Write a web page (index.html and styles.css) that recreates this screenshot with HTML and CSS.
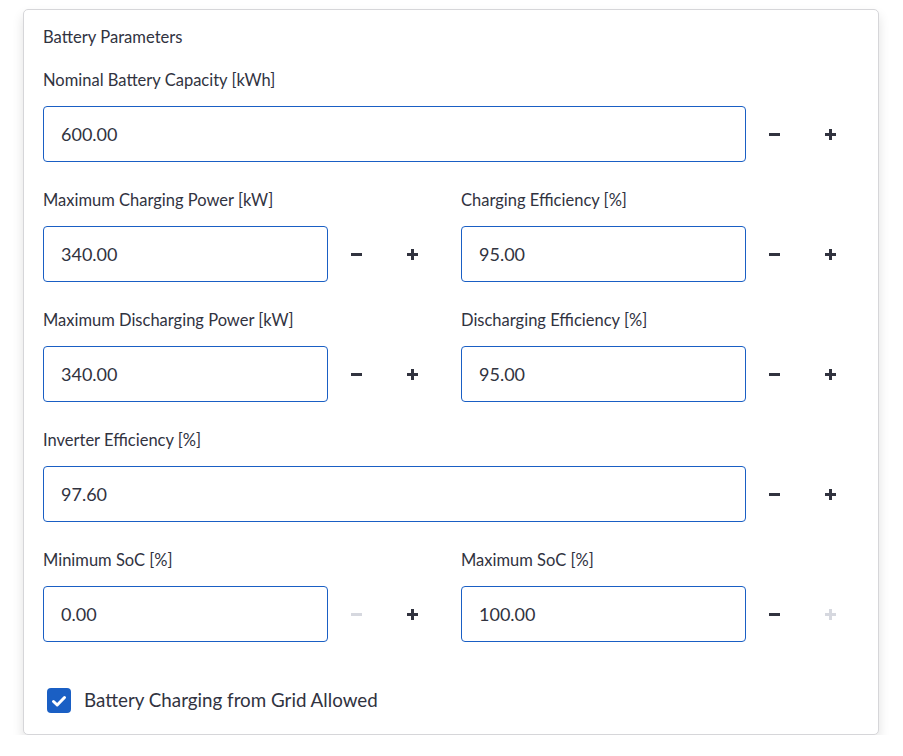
FILE: index.html
```html
<!DOCTYPE html>
<html>
<head>
<meta charset="utf-8">
<link rel="stylesheet" href="styles.css">
</head>
<body>
<div class="card">
  <div class="title">Battery Parameters</div>

  <div class="row">
    <div class="field">
      <label class="label">Nominal Battery Capacity [kWh]</label>
      <div class="control">
        <div class="input">600.00</div>
        <button class="step"><svg width="11" height="11" viewBox="0 0 11 11"><rect x="0" y="4" width="11" height="3" fill="currentColor"/></svg></button>
        <button class="step"><svg width="11" height="11" viewBox="0 0 11 11"><rect x="0" y="4" width="11" height="3" fill="currentColor"/><rect x="4" y="0" width="3" height="11" fill="currentColor"/></svg></button>
      </div>
    </div>
  </div>

  <div class="row two">
    <div class="field">
      <label class="label">Maximum Charging Power [kW]</label>
      <div class="control">
        <div class="input">340.00</div>
        <button class="step"><svg width="11" height="11" viewBox="0 0 11 11"><rect x="0" y="4" width="11" height="3" fill="currentColor"/></svg></button>
        <button class="step"><svg width="11" height="11" viewBox="0 0 11 11"><rect x="0" y="4" width="11" height="3" fill="currentColor"/><rect x="4" y="0" width="3" height="11" fill="currentColor"/></svg></button>
      </div>
    </div>
    <div class="field">
      <label class="label">Charging Efficiency [%]</label>
      <div class="control">
        <div class="input">95.00</div>
        <button class="step"><svg width="11" height="11" viewBox="0 0 11 11"><rect x="0" y="4" width="11" height="3" fill="currentColor"/></svg></button>
        <button class="step"><svg width="11" height="11" viewBox="0 0 11 11"><rect x="0" y="4" width="11" height="3" fill="currentColor"/><rect x="4" y="0" width="3" height="11" fill="currentColor"/></svg></button>
      </div>
    </div>
  </div>

  <div class="row two">
    <div class="field">
      <label class="label">Maximum Discharging Power [kW]</label>
      <div class="control">
        <div class="input">340.00</div>
        <button class="step"><svg width="11" height="11" viewBox="0 0 11 11"><rect x="0" y="4" width="11" height="3" fill="currentColor"/></svg></button>
        <button class="step"><svg width="11" height="11" viewBox="0 0 11 11"><rect x="0" y="4" width="11" height="3" fill="currentColor"/><rect x="4" y="0" width="3" height="11" fill="currentColor"/></svg></button>
      </div>
    </div>
    <div class="field">
      <label class="label">Discharging Efficiency [%]</label>
      <div class="control">
        <div class="input">95.00</div>
        <button class="step"><svg width="11" height="11" viewBox="0 0 11 11"><rect x="0" y="4" width="11" height="3" fill="currentColor"/></svg></button>
        <button class="step"><svg width="11" height="11" viewBox="0 0 11 11"><rect x="0" y="4" width="11" height="3" fill="currentColor"/><rect x="4" y="0" width="3" height="11" fill="currentColor"/></svg></button>
      </div>
    </div>
  </div>

  <div class="row">
    <div class="field">
      <label class="label">Inverter Efficiency [%]</label>
      <div class="control">
        <div class="input">97.60</div>
        <button class="step"><svg width="11" height="11" viewBox="0 0 11 11"><rect x="0" y="4" width="11" height="3" fill="currentColor"/></svg></button>
        <button class="step"><svg width="11" height="11" viewBox="0 0 11 11"><rect x="0" y="4" width="11" height="3" fill="currentColor"/><rect x="4" y="0" width="3" height="11" fill="currentColor"/></svg></button>
      </div>
    </div>
  </div>

  <div class="row two">
    <div class="field">
      <label class="label">Minimum SoC [%]</label>
      <div class="control">
        <div class="input">0.00</div>
        <button class="step disabled"><svg width="11" height="11" viewBox="0 0 11 11"><rect x="0" y="4" width="11" height="3" fill="currentColor"/></svg></button>
        <button class="step"><svg width="11" height="11" viewBox="0 0 11 11"><rect x="0" y="4" width="11" height="3" fill="currentColor"/><rect x="4" y="0" width="3" height="11" fill="currentColor"/></svg></button>
      </div>
    </div>
    <div class="field">
      <label class="label">Maximum SoC [%]</label>
      <div class="control">
        <div class="input">100.00</div>
        <button class="step"><svg width="11" height="11" viewBox="0 0 11 11"><rect x="0" y="4" width="11" height="3" fill="currentColor"/></svg></button>
        <button class="step disabled"><svg width="11" height="11" viewBox="0 0 11 11"><rect x="0" y="4" width="11" height="3" fill="currentColor"/><rect x="4" y="0" width="3" height="11" fill="currentColor"/></svg></button>
      </div>
    </div>
  </div>

  <div class="check">
    <span class="box"><svg width="16" height="16" viewBox="0 0 16 16"><path d="M2.5 8.5 L6.2 12 L13.5 4.5" fill="none" stroke="#fff" stroke-width="3" stroke-linecap="round" stroke-linejoin="round"/></svg></span>
    <span class="check-label">Battery Charging from Grid Allowed</span>
  </div>
</div>
</body>
</html>
```

FILE: styles.css
```css
* { box-sizing: border-box; }
html, body { margin: 0; padding: 0; background: #ffffff; }
body {
  font-family: "Lato", "Open Sans", sans-serif;
  color: #31333f;
  padding: 9px 24px 0 23px;
}
.card {
  width: 856px;
  height: 726px;
  border: 1px solid #d6d6d9;
  border-radius: 5px;
  background: #fff;
  box-shadow: 0 6px 12px rgba(0, 0, 0, 0.12);
  padding: 15px 20px 0 19px;
}
.title {
  font-size: 16.6px;
  line-height: 24px;
  margin-bottom: 19px;
}
.row {
  display: grid;
  grid-template-columns: 1fr;
  column-gap: 21px;
  margin-bottom: 26px;
}
.row.two { grid-template-columns: 1fr 1fr; }
.label {
  display: block;
  font-size: 16.5px;
  line-height: 24px;
  margin-bottom: 14px;
}
.control {
  display: flex;
  height: 56px;
}
.input {
  flex: 1;
  border: 1px solid #1a5fc4;
  border-radius: 4px;
  padding-left: 17px;
  font-size: 18px;
  display: flex;
  align-items: center;
}
.step {
  width: 56px;
  border: none;
  background: transparent;
  color: #31333f;
  padding: 0;
  display: flex;
  align-items: center;
  justify-content: center;
}
.step.disabled { color: #d6d8df; }
.check {
  display: flex;
  align-items: center;
  margin-top: 46px;
  margin-left: 4px;
  height: 25px;
}
.box {
  width: 24px;
  height: 25px;
  border-radius: 4px;
  background: #1a5fc4;
  display: flex;
  align-items: center;
  justify-content: center;
  margin-right: 13px;
}
.check-label {
  font-size: 18.8px;
  line-height: 28px;
  margin-top: -2px;
}
```
